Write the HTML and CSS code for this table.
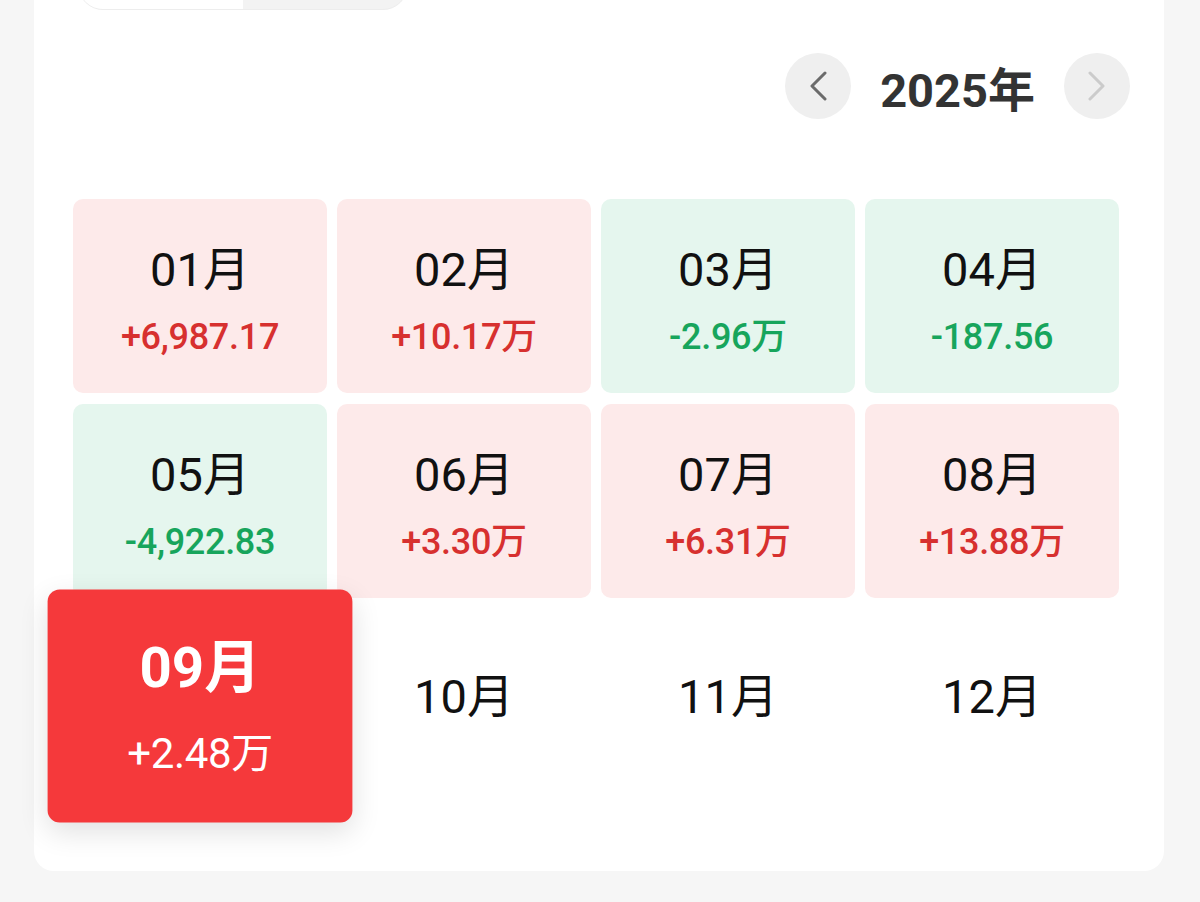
FILE: index.html
```html
<!DOCTYPE html>
<html lang="zh-CN">
<head>
  <meta charset="utf-8">
  <title>月度收益</title>
  <link rel="stylesheet" href="styles.css">
</head>
<body>
  <div class="card">
    <div class="seg">
      <span class="seg-item active"></span>
      <span class="seg-item"></span>
    </div>

    <div class="year-nav">
      <button class="nav-btn" type="button">
        <svg width="20" height="30" viewBox="0 0 20 30"><path d="M17 2 L4 15 L17 28" fill="none" stroke="#6b6b6b" stroke-width="3" stroke-linecap="round" stroke-linejoin="round"/></svg>
      </button>
      <span class="year">2025年</span>
      <button class="nav-btn disabled" type="button">
        <svg width="20" height="30" viewBox="0 0 20 30"><path d="M3 2 L16 15 L3 28" fill="none" stroke="#cbcbcb" stroke-width="3" stroke-linecap="round" stroke-linejoin="round"/></svg>
      </button>
    </div>

    <div class="months">
      <div class="month up"><span class="m-name">01月</span><span class="m-val">+6,987.17</span></div>
      <div class="month up"><span class="m-name">02月</span><span class="m-val">+10.17万</span></div>
      <div class="month down"><span class="m-name">03月</span><span class="m-val">-2.96万</span></div>
      <div class="month down"><span class="m-name">04月</span><span class="m-val">-187.56</span></div>
      <div class="month down"><span class="m-name">05月</span><span class="m-val">-4,922.83</span></div>
      <div class="month up"><span class="m-name">06月</span><span class="m-val">+3.30万</span></div>
      <div class="month up"><span class="m-name">07月</span><span class="m-val">+6.31万</span></div>
      <div class="month up"><span class="m-name">08月</span><span class="m-val">+13.88万</span></div>
      <div class="month current"><span class="m-name">09月</span><span class="m-val">+2.48万</span></div>
      <div class="month empty"><span class="m-name">10月</span></div>
      <div class="month empty"><span class="m-name">11月</span></div>
      <div class="month empty"><span class="m-name">12月</span></div>
    </div>
  </div>
</body>
</html>
```

FILE: styles.css
```css
* {
  box-sizing: border-box;
}

body {
  margin: 0;
  background: #f6f6f6;
  font-family: Roboto, "Noto Sans CJK SC", sans-serif;
  color: #111;
}

.card {
  width: 1130px;
  margin: -60px 0 0 34px;
  padding: 20px 34px 68px 39px;
  background: #fff;
  border-radius: 20px;
}

/* segmented control, mostly scrolled off the top */
.seg {
  display: flex;
  width: 330px;
  height: 50px;
  margin-left: 5px;
  border: 1px solid #ededed;
  border-radius: 25px;
  overflow: hidden;
  background: #f3f3f3;
}

.seg-item {
  flex: 1;
}

.seg-item.active {
  background: #fff;
}

.year-nav {
  display: flex;
  justify-content: flex-end;
  align-items: center;
  margin-top: 43px;
  height: 66px;
}

.nav-btn {
  width: 66px;
  height: 66px;
  border: none;
  border-radius: 50%;
  background: #efefef;
  display: flex;
  align-items: center;
  justify-content: center;
  padding: 0;
}

.year {
  margin: 0 29px;
  font-size: 47px;
  font-weight: bold;
  color: #333;
}

.months {
  display: grid;
  grid-template-columns: repeat(4, 254px);
  grid-auto-rows: 194px;
  gap: 11px 10px;
  margin-top: 80px;
}

.month {
  display: flex;
  flex-direction: column;
  align-items: center;
  justify-content: center;
  padding-top: 8px;
  border-radius: 10px;
}

.m-name {
  font-size: 47px;
  line-height: 54px;
  color: #111;
}

.m-val {
  margin-top: 20px;
  font-size: 36px;
  font-weight: 500;
  line-height: 40px;
  letter-spacing: -0.3px;
}

.month.up {
  background: #fdeaea;
}

.month.up .m-val {
  color: #d7302f;
}

.month.down {
  background: #e5f6ee;
}

.month.down .m-val {
  color: #17a55c;
}

.month.empty {
  padding-bottom: 26px;
}

.month.current {
  background: #f5393b;
  transform: scale(1.2);
  box-shadow: 0 8px 24px rgba(0, 0, 0, 0.12);
  position: relative;
  z-index: 1;
}

.month.current .m-name {
  color: #fff;
  font-weight: bold;
  margin-top: -6px;
}

.month.current .m-val {
  color: #fff;
  font-weight: normal;
  font-size: 35px;
  margin-top: 26px;
}
```
